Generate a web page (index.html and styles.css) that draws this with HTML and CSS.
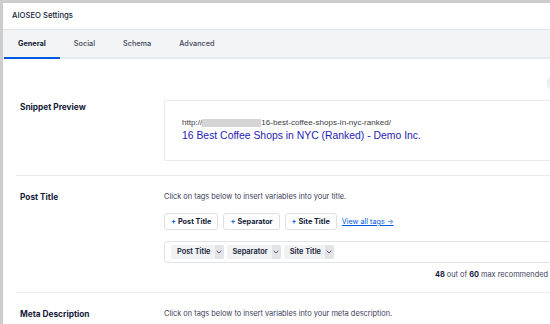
FILE: index.html
```html
<!DOCTYPE html>
<html>
<head>
<meta charset="utf-8">
<link rel="stylesheet" href="styles.css">
</head>
<body>
<div class="panel">
  <div class="hdr">AIOSEO Settings</div>
  <div class="tabs">
    <div class="tab active">General</div>
    <div class="tab">Social</div>
    <div class="tab">Schema</div>
    <div class="tab">Advanced</div>
  </div>
  <div class="content">
    <div class="row row-snippet">
      <div class="label label-snippet">Snippet Preview</div>
      <div class="field">
        <div class="toolbar"><span class="circle"></span></div>
        <div class="snippet">
          <div class="url">http://<span class="blur"></span>16-best-coffee-shops-in-nyc-ranked/</div>
          <div class="stitle">16 Best Coffee Shops in NYC (Ranked) - Demo Inc.</div>
        </div>
      </div>
    </div>
    <div class="row row-title">
      <div class="label">Post Title</div>
      <div class="field">
        <div class="desc">Click on tags below to insert variables into your title.</div>
        <div class="tags">
          <span class="tag"><span class="plus">+</span>Post Title</span>
          <span class="tag"><span class="plus">+</span>Separator</span>
          <span class="tag"><span class="plus">+</span>Site Title</span>
          <a class="viewall">View all tags →</a>
        </div>
        <div class="input">
          <span class="chip"><span class="chip-text">Post Title</span><span class="chev"><svg width="6" height="4" viewBox="0 0 6 4"><path d="M0.7 0.8 L3 3 L5.3 0.8" fill="none" stroke="#434960" stroke-width="0.9"/></svg></span></span>
          <span class="chip"><span class="chip-text">Separator</span><span class="chev"><svg width="6" height="4" viewBox="0 0 6 4"><path d="M0.7 0.8 L3 3 L5.3 0.8" fill="none" stroke="#434960" stroke-width="0.9"/></svg></span></span>
          <span class="chip"><span class="chip-text">Site Title</span><span class="chev"><svg width="6" height="4" viewBox="0 0 6 4"><path d="M0.7 0.8 L3 3 L5.3 0.8" fill="none" stroke="#434960" stroke-width="0.9"/></svg></span></span>
        </div>
        <div class="count"><b>48</b> out of <b>60</b> max recommended</div>
      </div>
    </div>
    <div class="row row-meta">
      <div class="label">Meta Description</div>
      <div class="field">
        <div class="desc">Click on tags below to insert variables into your meta description.</div>
      </div>
    </div>
  </div>
</div>
</body>
</html>
```

FILE: styles.css
```css
html, body {
  margin: 0;
  padding: 0;
}
body {
  background: #cdcdcd;
  padding: 3px 0 0 3px;
  height: 324px;
  box-sizing: border-box;
  overflow: hidden;
  font-family: Inter, "Noto Sans", sans-serif;
  color: #141b38;
}
.panel {
  width: 578px;
  background: #fff;
  min-height: 340px;
}
.hdr {
  height: 26px;
  line-height: 26px;
  padding-left: 9px;
  font-size: 7.7px;
  font-weight: 500;
  color: #141b38;
  border-bottom: 1px solid #e4e5e8;
}
.tabs {
  display: flex;
  background: #f3f4f5;
  border-bottom: 2px solid #e8e9ec;
  padding-left: 1px;
  height: 27px;
}
.tab {
  padding: 0 14px;
  line-height: 27px;
  font-size: 7.3px;
  font-weight: 500;
  color: #434960;
  margin-bottom: -2px;
  border-bottom: 2px solid transparent;
}
.tab.active {
  font-weight: 700;
  color: #141b38;
  border-bottom-color: #005ae0;
}
.content {
  display: flex;
  flex-direction: column;
}
.row {
  display: flex;
  margin-left: 13px;
  border-bottom: 1px solid #ebecee;
}
.label {
  width: 144px;
  flex: none;
  padding-left: 4px;
  font-size: 8.3px;
  font-weight: 700;
  line-height: 12px;
}
.field {
  flex: 1;
  min-width: 0;
  margin-right: 16px;
}
.row-snippet {
  padding: 15px 0 14px;
}
.label-snippet {
  padding-top: 27px;
}
.toolbar {
  display: flex;
  justify-content: flex-end;
  height: 18px;
  margin-bottom: 8px;
}
.circle {
  width: 18px;
  height: 18px;
  border-radius: 50%;
  background: #f3f4f5;
  border: 1px solid #e2e3e6;
  box-sizing: border-box;
}
.snippet {
  border: 1px solid #e8e9ec;
  border-radius: 2px;
  height: 61px;
  box-sizing: border-box;
  padding: 16px 17px 0;
}
.url {
  font-family: "Liberation Sans", Arial, sans-serif;
  font-size: 8.1px;
  line-height: 11px;
  color: #3c4043;
  display: flex;
  align-items: center;
}
.blur {
  display: inline-block;
  width: 59px;
  height: 8px;
  background: #d4d4d4;
}
.stitle {
  font-family: "Liberation Sans", Arial, sans-serif;
  font-size: 10.4px;
  line-height: 15px;
  color: #1e22b4;
}
.row-title {
  padding: 15px 0 11px;
}
.row-meta {
  padding: 15px 0 20px;
}
.desc {
  font-size: 7.4px;
  line-height: 12px;
  color: #3a4058;
}
.tags {
  display: flex;
  align-items: center;
  gap: 5px;
  margin-top: 10px;
}
.tag {
  display: inline-flex;
  align-items: center;
  height: 17px;
  box-sizing: border-box;
  border: 1px solid #dfe0e4;
  border-radius: 3px;
  padding: 0 6px;
  font-size: 7.3px;
  font-weight: 700;
  color: #141b38;
}
.plus {
  color: #005ae0;
  font-weight: 700;
  margin-right: 2px;
}
.viewall {
  font-size: 7.2px;
  color: #005ae0;
  text-decoration: underline;
}
.input {
  margin-top: 11px;
  height: 22px;
  box-sizing: border-box;
  border: 1px solid #e1e2e6;
  border-radius: 3px;
  display: flex;
  align-items: center;
  gap: 3px;
  padding: 0 6px;
}
.chip {
  display: inline-flex;
  align-items: stretch;
  height: 14px;
  background: #f1f2f4;
  border-radius: 2px;
  font-size: 7.4px;
  font-weight: 600;
  color: #141b38;
}
.chip-text {
  padding: 0 4px 0 6px;
  line-height: 14px;
}
.chev {
  width: 9px;
  background: #e2e4e8;
  display: flex;
  align-items: center;
  justify-content: center;
  border-radius: 0 2px 2px 0;
}
.count {
  margin-top: 6px;
  font-size: 7.35px;
  line-height: 12px;
  color: #3a4058;
  padding-left: 271px;
  white-space: nowrap;
}
.count b {
  color: #141b38;
  font-weight: 700;
}
```
